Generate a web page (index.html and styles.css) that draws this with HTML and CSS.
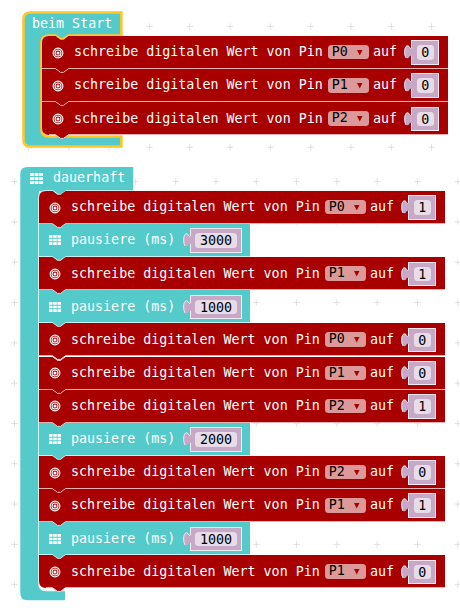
FILE: index.html
```
<!DOCTYPE html>
<html lang="de">
<head>
<meta charset="utf-8">
<title>Blöcke</title>
<link rel="stylesheet" href="styles.css">
<script src="blocks.js" defer></script>
</head>
<body>
<svg class="defs" width="0" height="0" aria-hidden="true">
  <defs>
    <pattern id="grid-a" x="8.4" y="6.3" width="40.3" height="40.3" patternUnits="userSpaceOnUse"><path class="cross" d="M17 20.15h6.4M20.15 17v6.4"/></pattern>
    <pattern id="grid-b" x="-5.7" y="6.5" width="40.3" height="40.3" patternUnits="userSpaceOnUse"><path class="cross" d="M17 20.15h6.4M20.15 17v6.4"/></pattern>
    <symbol id="target" viewBox="0 0 12 12"><g fill="none" stroke="#fff"><circle cx="6" cy="6" r="4.9" stroke-width="1.1"/><circle cx="6" cy="6" r="3" stroke-width="1.1"/><circle cx="6" cy="6" r="1.5" fill="#fff" stroke="none"/></g></symbol>
    <symbol id="dots" viewBox="0 0 12 10"><path fill="#fff" d="M0 0h3.5v2.7H0zM4.25 0h3.5v2.7h-3.5zM8.5 0H12v2.7H8.5zM0 3.65h3.5v2.7H0zM4.25 3.65h3.5v2.7h-3.5zM8.5 3.65H12v2.7H8.5zM0 7.3h3.5V10H0zM4.25 7.3h3.5V10h-3.5zM8.5 7.3H12V10H8.5z"/></symbol>
  </defs>
</svg>
<main>
  <section class="pane pane-start">
    <svg class="grid"><rect width="100%" height="100%" fill="url(#grid-a)"/></svg>
    <div class="hat hat-start">
      <svg class="frame" width="106" height="140"><path class="selected" d="M99.4 24.5V1.500H8.5Q1.5 1.5 1.5 8.5V128.5Q1.5 135.5 8.5 135.5H99.4V125.5H27Q19.5 125.5 19.5 118.5V31.5Q19.5 24.5 27 24.5H33.5l5 3.5h3l5-3.5z"/><path fill="#fff" d="M20.7 116V119Q20.7 124.3 27 124.3H34V120z"/></svg>
      <div class="head">beim Start</div>
      <div class="stack" data-rows="P0=0 P1=0 P2=0"></div>
    </div>
  </section>
  <section class="pane pane-loop">
    <svg class="grid"><rect width="100%" height="100%" fill="url(#grid-b)"/></svg>
    <div class="hat hat-loop">
      <svg class="frame" width="116" height="436"><path fill="#55caca" d="M.3 7Q.3 0 7.3 0H113.5V24H19V416.5Q19 424 26 424H45V433.3H7.3Q.3 433.3 .3 426.3z"/><path fill="#fff" d="M19 31Q19 24 26 24H60V424H26Q19 424 19 417z"/><path fill="#55caca" d="M30 23.500H48l-7 5h-4z"/><path fill="none" stroke="#dff5f5" d="M113.5 0V23.7H46l-5 3.7h-3l-5-3.7H26Q18.6 23.7 18.6 30.5V416.5Q18.6 423.8 26 423.8H45"/></svg>
      <div class="head"><svg class="icon-dots"><use href="#dots"/></svg>dauerhaft</div>
      <div class="stack" data-rows="P0=1 3000 P1=1 1000 P0=0 P1=0 P2=1 2000 P2=0 P1=1 1000 P1=0"></div>
    </div>
  </section>
</main>
</body>
</html>
```

FILE: styles.css
```
body {
  margin: 0;
  width: 460px;
  height: 608px;
  overflow: hidden;
  background: #fff;
  font: 13.333px/16px "DejaVu Sans Mono", monospace;
  color: #fff;
}
.defs { position: absolute; }
main { display: flex; flex-direction: column; }
.pane { position: relative; box-sizing: border-box; width: 460px; overflow: hidden; }
.pane-start { height: 155px; padding: 11px 0 0 22px; }
.pane-loop { height: 453px; padding: 11.7px 0 0 20px; }
.grid { position: absolute; left: 0; top: 0; width: 100%; height: 100%; }
.cross { stroke: #dfdfdf; stroke-width: 1; fill: none; }
.hat { position: relative; }
.frame { position: absolute; left: 0; top: 0; }
.selected { fill: #55caca; stroke: #ffc62a; stroke-width: 2.6; }
.head { position: relative; display: flex; align-items: center; box-sizing: border-box; }
.hat-start .head { height: 25px; padding: 0 0 0 10px; }
.hat-loop .head { height: 24.3px; padding: 0 0 2px 10px; }
.hat-loop .head .icon-dots { width: 13px; height: 11px; margin: 2px 10px 0 0; }
.stack { position: relative; display: flex; flex-direction: column; }
.hat-start .stack { margin-left: 20px; }
.hat-loop .stack { margin-left: 19px; }
.row {
  position: relative;
  display: flex;
  box-sizing: border-box;
  height: 33.13px;
  padding: 4.3px 0 0 10px;
}
.pin { width: 406px; }
.pause { width: 211px; }
.shape { position: absolute; left: 0; top: 0; overflow: visible; }
.shape .edge { fill: none; stroke: #fff; stroke-opacity: .85; }
.row > :not(.shape) { position: relative; flex: none; }
.row .icon { width: 12px; height: 12px; margin: 6.3px 10px 0 0; }
.pause .icon { height: 10px; margin-top: 7px; }
.label { margin-top: 4px; white-space: pre; }
.select {
  display: flex;
  justify-content: space-between;
  box-sizing: border-box;
  width: 41px;
  height: 14.5px;
  margin: 4.6px 4.3px 0 5px;
  padding: 0 6px 0 4px;
  border-radius: 3.5px;
  background: #dc9999;
  color: #000;
  line-height: 14.5px;
}
.arrow { width: 5.5px; height: 5.5px; margin-top: 5px; }
.value { display: flex; margin-left: 7px; }
.pause .value { margin-left: 7.7px; }
.plug { width: 8px; height: 24.5px; margin-right: -1px; z-index: 1; }
.box {
  display: flex;
  align-items: center;
  justify-content: center;
  box-sizing: border-box;
  height: 24.5px;
  width: 28px;
  border: 1px solid #f1e9f1;
  background: #c7a8c7;
}
.pause .box { width: 52px; }
.field {
  height: 14.5px;
  line-height: 15px;
  padding: 0 4.5px;
  border-radius: 3.5px;
  background: #e8dce8;
  color: #000;
}
```

FILE: blocks.js
```
const PLUG = '<svg class="plug" viewBox="0 0 8 24.5"><path fill="#c7a8c7" d="M8.5 7.5C7 9 5.5 8.5 5 6.5C2.5 4.5.5 7 .5 12C.5 17 2.5 19.5 5 17.5C5.5 15.5 7 15 8.5 16.5z"/><path fill="none" stroke="#f1e9f1" d="M7.5 7.5C6.5 9 5.5 8.5 5 6.5C2.5 4.5.7 7 .7 12Q.7 16 2 18"/></svg>';

function shape(width, color, first, last) {
  const top = first ? 'M0 7Q0 0 7 0H13.5' : 'M0 0H13.5';
  const base = last ? 'H7Q0 33 0 26z' : 'H0z';
  const edge = last ? 'H7' : 'H0';
  return `<svg class="shape" width="${width}" height="38"><path fill="${color}" d="${top}l5 3.7h3l5-3.7H${width}V33H26.5l-5 3.7h-3l-5-3.7${base}"/>` +
    `<path class="edge" d="M${width} 32.7H26.5l-5 3.7h-3l-5-3.7${edge}"/></svg>`;
}

function value(text) {
  return `<span class="value">${PLUG}<span class="box"><span class="field">${text}</span></span></span>`;
}

for (const stack of document.querySelectorAll('.stack')) {
  const rows = stack.dataset.rows.split(' ');
  stack.innerHTML = rows.map((row, i) => {
    const first = i === 0, last = i === rows.length - 1;
    if (!row.includes('=')) {
      return `<div class="row pause">${shape(211, '#55caca', first, last)}<svg class="icon"><use href="#dots"/></svg><span class="label">pausiere (ms)</span>${value(row)}</div>`;
    }
    const [pin, level] = row.split('=');
    return `<div class="row pin">${shape(406, '#a80000', first, last)}<svg class="icon"><use href="#target"/></svg>` +
      `<span class="label">schreibe digitalen Wert von Pin</span>` +
      `<span class="select">${pin}<svg class="arrow" viewBox="0 0 6 6"><path fill="#a80000" d="M0 0h6L3 6z"/></svg></span>` +
      `<span class="label">auf</span>${value(level)}</div>`;
  }).join('');
}
```
